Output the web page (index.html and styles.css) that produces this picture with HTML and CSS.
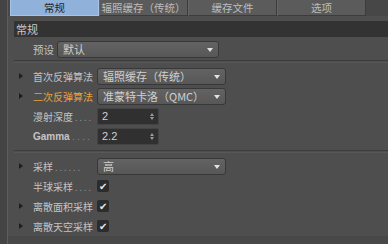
FILE: index.html
```html
<!DOCTYPE html>
<html lang="zh">
<head>
    <meta charset="UTF-8">
    <title>常规</title>
    <link rel="stylesheet" href="styles.css">
</head>
<body>
    <div class="page">
        <div class="tabs">
            <div class="tab active">常规</div>
            <div class="tab">辐照缓存（传统）</div>
            <div class="tab">缓存文件</div>
            <div class="tab">选项</div>
        </div>

        <div class="section-title">常规</div>

        <div class="row preset">
            <span class="label">预设</span>
            <div class="select wide">默认<span class="arrow"></span></div>
        </div>

        <div class="sep"></div>

        <div class="row">
            <span class="tri"></span>
            <span class="label">首次反弹算法</span>
            <div class="select">辐照缓存（传统）<span class="arrow"></span></div>
        </div>
        <div class="row">
            <span class="tri"></span>
            <span class="label orange">二次反弹算法</span>
            <div class="select">准蒙特卡洛（QMC）<span class="arrow"></span></div>
        </div>
        <div class="row">
            <span class="tri none"></span>
            <span class="label">漫射深度<span class="dots"> . . . .</span></span>
            <div class="spin">2<span class="updown"></span></div>
        </div>
        <div class="row">
            <span class="tri none"></span>
            <span class="label bold">Gamma<span class="dots"> . . . .</span></span>
            <div class="spin">2.2<span class="updown"></span></div>
        </div>

        <div class="sep low"></div>

        <div class="row">
            <span class="tri"></span>
            <span class="label">采样<span class="dots"> . . . . . .</span></span>
            <div class="select">高<span class="arrow"></span></div>
        </div>
        <div class="row">
            <span class="tri none"></span>
            <span class="label">半球采样<span class="dots"> . . . .</span></span>
            <span class="check">✔</span>
        </div>
        <div class="row">
            <span class="tri"></span>
            <span class="label">离散面积采样</span>
            <span class="check">✔</span>
        </div>
        <div class="row">
            <span class="tri"></span>
            <span class="label">离散天空采样</span>
            <span class="check">✔</span>
        </div>

        <div class="bottom"></div>
    </div>
</body>
</html>
```

FILE: styles.css
```css
body {
    margin: 0;
    padding: 0;
    background-color: #444;
    font-family: "Noto Sans CJK SC", "Liberation Sans", sans-serif;
    font-size: 11px;
    color: #c4c4c4;
}
.page {
    margin-left: 7px;
    width: 380px;
    height: 244px;
    border-left: 1px solid #5e5e5e;
    background-color: #4e4e4e;
    display: flex;
    flex-direction: column;
    overflow: hidden;
}
.tabs {
    display: flex;
    height: 16px;
    padding-left: 2px;
    background-color: #474747;
}
.tab {
    width: 87px;
    height: 15px;
    line-height: 15px;
    text-align: center;
    background-color: #5b5b5b;
    border: 1px solid #3c3c3c;
    border-top: none;
    border-left-color: #666;
    color: #bdbdbd;
    font-size: 10.5px;
}
.tab.active {
    background-color: #90b1da;
    color: #1c2430;
    border-color: #a9c3e4;
}
.section-title {
    margin: 5px 0 0 6px;
    height: 16px;
    line-height: 16px;
    padding-left: 2px;
    background-color: #333;
    color: #c8c8c8;
}
.row {
    display: flex;
    align-items: center;
    height: 20px;
    flex-shrink: 0;
}
.row.preset {
    margin-top: 2px;
    padding-left: 25px;
}
.tri {
    width: 0;
    height: 0;
    margin-left: 11px;
    margin-right: 10px;
    border-top: 3px solid transparent;
    border-bottom: 3px solid transparent;
    border-left: 4px solid #1e1e1e;
}
.tri.none {
    border-left-color: transparent;
}
.label {
    width: 64px;
    font-size: 10px;
    white-space: nowrap;
}
.preset .label {
    width: 24px;
    font-size: 10.5px;
}
.label.orange {
    color: #e9a23b;
}
.label.bold {
    font-family: "Liberation Sans", sans-serif;
    font-weight: bold;
}
.dots {
    color: #8c8c8c;
    font-weight: normal;
    font-size: 9px;
}
.select {
    position: relative;
    width: 122px;
    height: 15px;
    line-height: 15px;
    padding-left: 5px;
    border: 1px solid #383838;
    border-radius: 3px;
    background: linear-gradient(#636363, #575757);
    color: #d0d0d0;
    white-space: nowrap;
    overflow: hidden;
}
.select.wide {
    width: 155px;
}
.arrow {
    position: absolute;
    right: 5px;
    top: 6px;
    border-left: 3px solid transparent;
    border-right: 3px solid transparent;
    border-top: 4px solid #e2e2e2;
}
.spin {
    position: relative;
    width: 56px;
    height: 15px;
    line-height: 15px;
    padding-left: 4px;
    border: 1px solid #444;
    border-radius: 2px;
    background-color: #303030;
    color: #cfcfcf;
    font-family: "Liberation Sans", sans-serif;
}
.updown::before,
.updown::after {
    content: "";
    position: absolute;
    right: 4px;
    border-left: 2px solid transparent;
    border-right: 2px solid transparent;
}
.updown::before {
    top: 4px;
    border-bottom: 3px solid #9a9a9a;
}
.updown::after {
    top: 8px;
    border-top: 3px solid #9a9a9a;
}
.check {
    width: 12px;
    height: 12px;
    line-height: 12px;
    border-radius: 2px;
    background-color: #2c2c2c;
    color: #e6e6e6;
    font-size: 10px;
    text-align: center;
}
.sep {
    margin: 1px 0 3px 6px;
    height: 1px;
    border-top: 1px solid #3c3c3c;
    border-bottom: 1px solid #585858;
    flex-shrink: 0;
}
.sep.low {
    margin: 4px 0 3px 6px;
}
.bottom {
    flex: 1;
    background-color: #484848;
}
```
